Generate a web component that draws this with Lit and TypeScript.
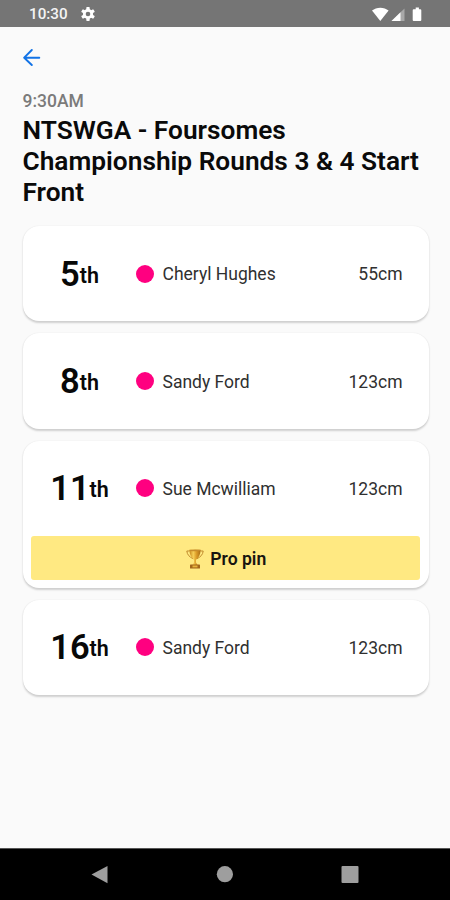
import { LitElement, html, css, svg, nothing } from "lit";
import { customElement, property } from "lit/decorators.js";

interface Entry {
  hole: number;
  name: string;
  distance: string;
  proPin?: boolean;
}

const entries: Entry[] = [
  { hole: 5, name: "Cheryl Hughes", distance: "55cm" },
  { hole: 8, name: "Sandy Ford", distance: "123cm" },
  { hole: 11, name: "Sue Mcwilliam", distance: "123cm", proPin: true },
  { hole: 16, name: "Sandy Ford", distance: "123cm" },
];

const gearTeeth = [0, 60, 120].map(
  (a) => svg`<rect x="5.3" y="0" width="3.4" height="14" rx="0.7" transform="rotate(${a} 7 7)"/>`
);

@customElement("status-bar")
class StatusBar extends LitElement {
  static styles = css`
    :host {
      display: flex;
      align-items: center;
      height: 27px;
      box-sizing: border-box;
      padding: 1px 27px 0 29px;
      background: #757575;
      color: #f4f4f4;
      font-size: 15.2px;
      font-weight: 500;
      line-height: 24px;
    }
    .time { width: 52px; }
    .gear { display: block; }
    .system { margin-left: auto; display: block; }
  `;
  render() {
    return html`
      <span class="time">10:30</span>
      <svg class="gear" width="14" height="14" viewBox="0 0 14 14">
        <g fill="#fff">${gearTeeth}<circle cx="7" cy="7" r="5.1" /></g>
        <circle cx="7" cy="7" r="2.3" fill="#757575" />
      </svg>
      <svg class="system" width="52" height="17" viewBox="0 0 52 17">
        <path d="M1 4.6C5.4 0.7 13.2 0.7 17.6 4.6L9.3 15Z" fill="#fff" />
        <path d="M33.5 2.5V15H20.5Z" fill="#a8a8a8" />
        <path d="M29.5 6.3V15H20.5Z" fill="#fff" />
        <path d="M42.7 3.2h2V1.6h3.2v1.6h1.4a1 1 0 0 1 1 1V14a1 1 0 0 1-1 1h-6.6a1 1 0 0 1-1-1V4.2a1 1 0 0 1 1-1Z" fill="#fff" />
      </svg>
    `;
  }
}

@customElement("hole-card")
class HoleCard extends LitElement {
  @property({ attribute: false }) entry!: Entry;

  static styles = css`
    :host {
      display: block;
      box-sizing: border-box;
      background: #fff;
      border-radius: 16px;
      box-shadow: 0 1.5px 2px rgba(0, 0, 0, 0.17), 0 0 1.5px rgba(0, 0, 0, 0.06);
    }
    .row {
      display: flex;
      align-items: center;
      height: 95.4px;
      padding: 0 26px 0 0;
    }
    .hole {
      width: 113px;
      box-sizing: border-box;
      padding: 7px 0 0 1px;
      text-align: center;
      color: #080808;
      font-weight: 600;
      white-space: nowrap;
      line-height: 44px;
    }
    .number { font-size: 34.5px; }
    .suffix { font-size: 21.5px; position: relative; top: -3px; }
    .dot {
      width: 18px;
      height: 18px;
      border-radius: 50%;
      background: #ff0080;
    }
    .name { margin-left: 9px; flex: 1; }
    .name, .distance {
      font-size: 17.5px;
      line-height: 24px;
      color: #303030;
      padding-top: 1px;
    }
    .pin {
      display: flex;
      align-items: center;
      justify-content: center;
      height: 43.5px;
      box-sizing: border-box;
      padding: 1.5px 0 0 2px;
      border-radius: 3px;
      background: #ffe982;
      color: #181510;
      font-size: 17.6px;
      font-weight: 600;
      gap: 6px;
    }
    .pin-wrap { padding: 0 8.5px 8px 8px; }
    .trophy { display: block; }
  `;

  render() {
    const { hole, name, distance, proPin } = this.entry;
    return html`
      <div class="row">
        <div class="hole"><span class="number">${hole}</span><span class="suffix">th</span></div>
        <div class="dot"></div>
        <div class="name">${name}</div>
        <div class="distance">${distance}</div>
      </div>
      ${proPin
        ? html`<div class="pin-wrap"><div class="pin">
            <svg class="trophy" width="18" height="20" viewBox="0 0 18 20">
              <defs>
                <linearGradient id="gold" x1="0" x2="1">
                  <stop offset="0" stop-color="#c58418" />
                  <stop offset="0.35" stop-color="#f6cf58" />
                  <stop offset="0.6" stop-color="#dfa02a" />
                  <stop offset="1" stop-color="#a86b14" />
                </linearGradient>
              </defs>
              <path d="M3.5 2H0.8C1.2 5.8 3.5 8 7.2 9.8M14.5 2h2.7C16.8 5.8 14.5 8 10.8 9.8" fill="none" stroke="#c08a2c" stroke-width="1" />
              <path d="M3.3 0.8h11.4C14.4 5.8 12.6 8.8 10 10.8V13.6l1.6 2.4H6.4l1.6-2.4V10.8C5.4 8.8 3.6 5.8 3.3 0.8Z" fill="url(#gold)" />
              <ellipse cx="9" cy="1.4" rx="5.6" ry="0.8" fill="#c68c2c" />
              <rect x="4" y="15.6" width="10" height="3.9" rx="0.6" fill="#a3671a" />
              <rect x="6.5" y="16.5" width="5" height="1.9" fill="#e8b33c" />
            </svg>
            <span>Pro pin</span>
          </div></div>`
        : nothing}
    `;
  }
}

@customElement("app-root")
class AppRoot extends LitElement {
  static styles = css`
    :host {
      display: flex;
      flex-direction: column;
      height: 900px;
      box-sizing: border-box;
      background: #fafafa;
      font-family: Roboto, "Liberation Sans", sans-serif;
    }
    main { flex: 1; padding: 21.5px 21.5px 0 22.5px; }
    .back { display: block; }
    .time {
      margin-top: 24.5px;
      font-size: 17.5px;
      line-height: 20px;
      font-weight: 500;
      color: #7b7b7b;
    }
    h1 {
      margin: 4px 0 0;
      font-size: 26.27px;
      line-height: 31px;
      font-weight: 600;
      color: #0a0a0a;
    }
    .list { display: flex; flex-direction: column; gap: 12px; margin-top: 18px; }
    nav {
      display: flex;
      align-items: center;
      justify-content: space-between;
      height: 52px;
      box-sizing: border-box;
      padding: 0 91px;
      background: #000;
      border-top: 1px solid #555;
    }
    nav svg { display: block; }
  `;

  render() {
    return html`
      <status-bar></status-bar>
      <main>
        <svg class="back" width="18" height="18" viewBox="0 0 18 18" fill="none" stroke="#1273e6" stroke-width="1.9" stroke-linecap="round" stroke-linejoin="round">
          <path d="M16.3 8.7H1.3M8.8 1L1.2 8.7L8.8 16" />
        </svg>
        <div class="time">9:30AM</div>
        <h1>NTSWGA - Foursomes Championship Rounds 3 &amp; 4 Start Front</h1>
        <div class="list">${entries.map((e) => html`<hole-card .entry=${e}></hole-card>`)}</div>
      </main>
      <nav>
        <svg width="17" height="18" viewBox="0 0 17 18"><path d="M16.5 0V17.2L0.5 8.5Z" fill="#9e9e9e" /></svg>
        <svg width="17" height="17" viewBox="0 0 17 17"><circle cx="8.9" cy="8.2" r="8.1" fill="#9e9e9e" /></svg>
        <svg width="18" height="18" viewBox="0 0 18 18"><rect x="0.5" y="0" width="17" height="17" rx="1" fill="#9e9e9e" /></svg>
      </nav>
    `;
  }
}
